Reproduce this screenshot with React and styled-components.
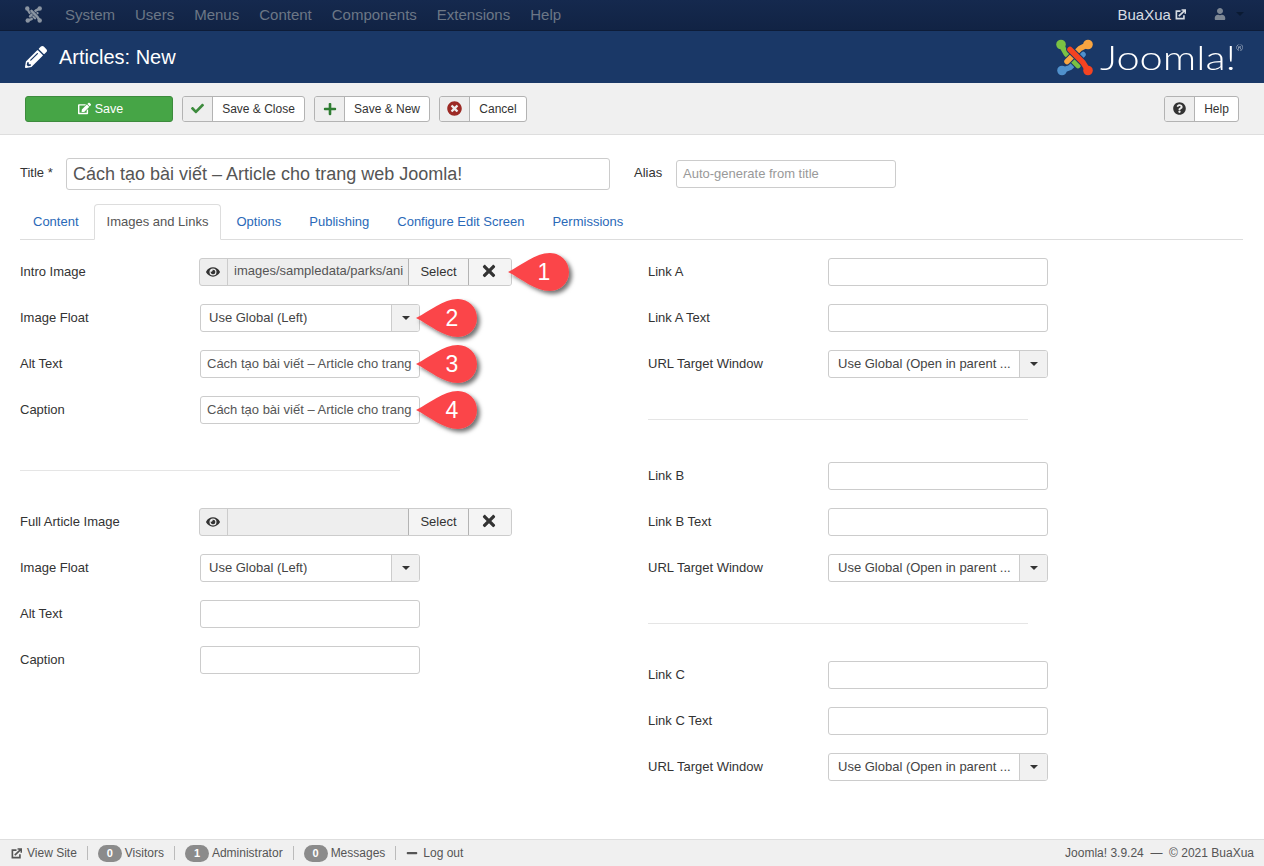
import React from "react";
import styled, { createGlobalStyle } from "styled-components";
import { FaEye, FaTimes, FaQuestionCircle, FaCheck, FaPlus, FaTimesCircle, FaUser, FaPencilAlt, FaEdit, FaMinus } from "react-icons/fa";

const Global = createGlobalStyle`
  html, body { margin: 0; padding: 0; background: #fff; }
  body { font-family: "Liberation Sans", Arial, sans-serif; font-size: 13px; color: #333; }
  * { box-sizing: border-box; }
`;

const Page = styled.div`
  position: relative;
  width: 1264px;
  height: 866px;
  overflow: hidden;
  display: flex;
  flex-direction: column;
`;
const Navbar = styled.nav`
  height: 31px;
  flex: none;
  background: linear-gradient(#15294e, #112344);
  border-bottom: 1px solid #0d1c38;
  display: flex;
  align-items: center;
  padding: 0 20px 2px 25px;
  color: #6c7786;
  font-size: 15px;
`;
const NavBrand = styled.span`
  display: flex;
  width: 40px;
`;
const NavMenu = styled.div`
  display: flex;
  gap: 20px;
  flex: 1;
`;
const NavRight = styled.div`
  display: flex;
  align-items: center;
  color: #d8dce2;
  font-size: 15px;
`;
const UserMenu = styled.span`
  display: flex;
  align-items: center;
  gap: 10px;
  color: #7d8794;
  margin-left: 28px;
`;
const Caret = styled.span`
  width: 0;
  height: 0;
  border-left: 4px solid transparent;
  border-right: 4px solid transparent;
  border-top: 4px solid ${p => p.$color || "#0a1a33"};
`;
const Header = styled.header`
  height: 52px;
  flex: none;
  background: #1a3867;
  color: #fff;
  display: flex;
  align-items: center;
  padding: 0 26px 0 25px;
`;
const HeaderTitle = styled.h1`
  margin: 0 0 0 12px;
  font-size: 20px;
  font-weight: 400;
  flex: 1;
`;
const Logo = styled.div`
  display: flex;
  align-items: center;
  gap: 7px;
`;
const LogoWord = styled.span`
  position: relative;
  display: block;
  width: 138px;
  height: 36px;
  line-height: 36px;
  font-family: Lato, "Liberation Sans", sans-serif;
  font-weight: 300;
  font-size: 33px;
  color: #fff;
  white-space: nowrap;
  transform: scaleX(1.26);
  transform-origin: left center;
`;
const Reg = styled.sup`
  position: absolute;
  font-size: 7px;
  top: 6px;
  left: 108px;
  line-height: 1;
`;
const Toolbar = styled.div`
  height: 52px;
  flex: none;
  background: #f0f0f0;
  border-bottom: 1px solid #dedede;
  display: flex;
  align-items: center;
  gap: 9px;
  padding: 0 25px;
`;
const SaveButton = styled.button`
  width: 148px;
  height: 26px;
  background: #46a546;
  border: 1px solid #3d8b3d;
  border-radius: 3px;
  color: #fff;
  font: 12.5px "Liberation Sans", sans-serif;
  display: flex;
  align-items: center;
  justify-content: center;
  gap: 4px;
  padding: 0 0 0 3px;
`;
const ToolButton = styled.button`
  width: ${p => p.$w}px;
  height: 26px;
  background: #fff;
  border: 1px solid #b3b3b3;
  border-radius: 3px;
  color: #333;
  font: 12px "Liberation Sans", sans-serif;
  display: flex;
  align-items: stretch;
  padding: 0;
  margin-left: ${p => (p.$push ? "auto" : "0")};
  overflow: hidden;
`;
const ToolIcon = styled.span`
  width: 30px;
  flex: none;
  background: #eeeeee;
  border-right: 1px solid #b3b3b3;
  display: flex;
  align-items: center;
  justify-content: center;
  color: ${p => p.$color};
  font-size: ${p => p.$size || 13}px;
`;
const ToolLabel = styled.span`
  flex: 1;
  display: flex;
  align-items: center;
  justify-content: center;
`;
const Main = styled.main`
  flex: 1;
  padding: 23px 21px 0 20px;
`;
const TitleRow = styled.div`
  display: flex;
  align-items: flex-start;
  height: 32px;
`;
const TopLabel = styled.label`
  font-size: 13px;
  line-height: 29px;
  width: ${p => p.$w}px;
  flex: none;
`;
const TitleInput = styled.div`
  width: 544px;
  height: 32px;
  border: 1px solid #ccc;
  border-radius: 3px;
  font-size: 18px;
  line-height: 30px;
  padding: 0 6px;
  color: #555;
  margin-right: 24px;
  white-space: nowrap;
  overflow: hidden;
`;
const Field = styled.div`
  flex: none;
  height: 28px;
  width: 220px;
  margin-top: ${p => p.$top || 0}px;
  border: 1px solid #ccc;
  border-radius: 3px;
  padding: 0 6px;
  font-size: 13px;
  line-height: 26px;
  color: ${p => (p.$placeholder ? "#999" : "#555")};
  background: #fff;
  white-space: nowrap;
  overflow: hidden;
`;
const Tabs = styled.div`
  display: flex;
  gap: 2px;
  margin-top: 14px;
  height: 36px;
  border-bottom: 1px solid #ddd;
`;
const Tab = styled.div`
  height: ${p => (p.$active ? 36 : 35)}px;
  padding: 0 12px;
  line-height: 34px;
  font-size: 13px;
  color: ${p => (p.$active ? "#555" : "#2a69b8")};
  border: 1px solid ${p => (p.$active ? "#ddd" : "transparent")};
  border-bottom-color: ${p => (p.$active ? "#fff" : "transparent")};
  border-radius: 4px 4px 0 0;
  background: #fff;
`;
const Columns = styled.div`
  display: grid;
  grid-template-columns: 628px 1fr;
  margin-top: 18px;
`;
const Column = styled.div`
  display: flex;
  flex-direction: column;
`;
const Row = styled.div`
  display: flex;
  align-items: center;
  height: 28px;
  margin-bottom: 18px;
`;
const RowLabel = styled.label`
  width: 180px;
  flex: none;
  font-size: 13px;
  line-height: 15px;
  padding-bottom: 1px;
  color: #333;
`;
const Rule = styled.hr`
  width: 380px;
  margin: ${p => p.$top}px 0 ${p => p.$bottom}px;
  border: 0;
  border-top: 1px solid #e5e5e5;
  height: 0;
`;
const ImageGroup = styled.div`
  display: flex;
  height: 28px;
  margin-left: -1px;
  border: 1px solid #ccc;
  border-radius: 3px;
  background: #eee;
  overflow: hidden;
`;
const Addon = styled.span`
  width: 28px;
  display: flex;
  align-items: center;
  justify-content: center;
  padding-right: 2px;
  font-size: 14px;
  color: #333;
  border-right: 1px solid #ccc;
`;
const ImagePath = styled.span`
  width: 180px;
  padding: 0 6px;
  font-size: 13px;
  line-height: 24px;
  color: #555;
  white-space: nowrap;
  overflow: hidden;
`;
const GroupButton = styled.span`
  width: ${p => p.$w}px;
  display: flex;
  align-items: center;
  justify-content: center;
  padding-right: ${p => p.$shift || 0}px;
  padding-bottom: 2px;
  background: #f4f4f4;
  border-left: 1px solid #b3b3b3;
  font-size: ${p => p.$size || 13}px;
  color: #333;
`;
const Select = styled.div`
  width: 220px;
  height: 28px;
  border: 1px solid #ccc;
  border-radius: 3px;
  display: flex;
  background: #fff;
  overflow: hidden;
`;
const SelectValue = styled.span`
  flex: 1;
  padding: 0 0 0 ${p => p.$pad || 8}px;
  line-height: 26px;
  font-size: 13px;
  color: #444;
  white-space: nowrap;
`;
const SelectArrow = styled.span`
  width: 28px;
  background: #f1f1f1;
  border-left: 1px solid #ccc;
  display: flex;
  align-items: center;
  justify-content: center;
`;
const Footer = styled.footer`
  height: 27px;
  flex: none;
  background: #f0f0f0;
  border-top: 1px solid #dedede;
  display: flex;
  align-items: center;
  padding: 0 10px;
  font-size: 12px;
  color: #555;
`;
const FootItem = styled.span`
  display: flex;
  align-items: center;
  gap: ${p => p.$gap || 3}px;
  padding: 0 10px 0 ${p => (p.$first ? 1 : 10)}px;
  height: 14px;
  border-right: ${p => (p.$last ? "0" : "1px solid #bbb")};
`;
const Count = styled.span`
  min-width: 24px;
  height: 17px;
  line-height: 17px;
  border-radius: 9px;
  background: #8b8b8b;
  color: #fff;
  font-size: 11px;
  font-weight: 700;
  text-align: center;
`;
const FootRight = styled.span`
  margin-left: auto;
`;
const Pin = styled.div`
  position: absolute;
  left: ${p => p.$x}px;
  top: ${p => p.$y}px;
  width: 72px;
  height: 48px;
`;
const PinNumber = styled.span`
  position: absolute;
  left: 0;
  top: 0;
  width: 74px;
  text-align: center;
  color: #fff;
  font-size: 23px;
  line-height: 40px;
`;

const OutIcon = ({ size = 11, color = "currentColor" }) => (
  <svg width={size} height={size} viewBox="0 0 16 16" fill="none" stroke={color}>
    <path d="M8 3H2v11h11V9" strokeWidth="2.4" />
    <path d="M5.5 10.5L14 2.5M9.5 1.5h5.5v5.5" strokeWidth="2.4" />
  </svg>
);

const JoomlaMark = ({ size, mono, bg }) => {
  const c = mono ? [mono, mono, mono, mono] : ["#7ac143", "#f9a541", "#f44321", "#5091cd"];
  const strokes = [
    { color: c[3], d: "M6 31 L14 28 L27 15", cx: 6, cy: 31 },
    { color: c[0], d: "M5 5 L10 14 L22 26", cx: 5, cy: 5 },
    { color: c[1], d: "M32 5 L24 9 L11 22", cx: 32, cy: 5 },
    { color: c[2], d: "M32 31 L27 23 L14 10", cx: 32, cy: 31 },
  ];
  return (
    <svg width={size} height={size} viewBox="0 0 37 36" fill="none">
      {strokes.map((s, i) => (
        <g key={i}>
          <path d={s.d} stroke={bg} strokeWidth="7.5" strokeLinecap="round" strokeLinejoin="round" />
          <path d={s.d} stroke={s.color} strokeWidth="5.5" strokeLinecap="round" strokeLinejoin="round" />
          <circle cx={s.cx} cy={s.cy} r="4.8" fill={s.color} />
        </g>
      ))}
    </svg>
  );
};

const Callout = ({ x, y, n }) => (
  <Pin $x={x} $y={y}>
    <svg width="72" height="48" viewBox="0 0 72 48">
      <defs>
        <filter id={`sh${n}`} x="-20%" y="-20%" width="140%" height="140%">
          <feDropShadow dx="3" dy="3" stdDeviation="2" floodColor="#000" floodOpacity="0.55" />
        </filter>
      </defs>
      <path
        d="M1 20 C15 13 28 1 43 1 C53.5 1 62 9.5 62 20 C62 30.5 53.5 39 43 39 C28 39 15 27 1 20 Z"
        fill="#fb4549"
        filter={`url(#sh${n})`}
      />
    </svg>
    <PinNumber>{n}</PinNumber>
  </Pin>
);

const LinkGroup = ({ name }) => (
  <>
    <Row><RowLabel>Link {name}</RowLabel><Field /></Row>
    <Row><RowLabel>Link {name} Text</RowLabel><Field /></Row>
    <Row>
      <RowLabel>URL Target Window</RowLabel>
      <Select>
        <SelectValue $pad={9}>Use Global (Open in parent ...</SelectValue>
        <SelectArrow><Caret $color="#333" /></SelectArrow>
      </Select>
    </Row>
  </>
);

const TITLE = "Cách tạo bài viết – Article cho trang web Joomla!";
const ALT = "Cách tạo bài viết – Article cho trang";

export default function App() {
  return (
    <Page>
      <Global />
      <Navbar>
        <NavBrand><JoomlaMark size={17} mono="#8a94a1" bg="#13264a" /></NavBrand>
        <NavMenu>
          {["System", "Users", "Menus", "Content", "Components", "Extensions", "Help"].map(m => <span key={m}>{m}</span>)}
        </NavMenu>
        <NavRight>
          BuaXua&nbsp;<OutIcon size={11} />
          <UserMenu><FaUser size={12} /><Caret /></UserMenu>
        </NavRight>
      </Navbar>
      <Header>
        <FaPencilAlt size={22} />
        <HeaderTitle>Articles: New</HeaderTitle>
        <Logo>
          <JoomlaMark size={37} bg="#1a3867" />
          <LogoWord>Joomla!<Reg>®</Reg></LogoWord>
        </Logo>
      </Header>
      <Toolbar>
        <SaveButton><FaEdit size={13} />Save</SaveButton>
        <ToolButton $w={123}><ToolIcon $color="#3d8b3d" $size={13}><FaCheck /></ToolIcon><ToolLabel>Save &amp; Close</ToolLabel></ToolButton>
        <ToolButton $w={116}><ToolIcon $color="#2f7d32" $size={14}><FaPlus /></ToolIcon><ToolLabel>Save &amp; New</ToolLabel></ToolButton>
        <ToolButton $w={88}><ToolIcon $color="#9c2a25" $size={15}><FaTimesCircle /></ToolIcon><ToolLabel>Cancel</ToolLabel></ToolButton>
        <ToolButton $w={75} $push><ToolIcon $color="#333"><FaQuestionCircle /></ToolIcon><ToolLabel>Help</ToolLabel></ToolButton>
      </Toolbar>
      <Main>
        <TitleRow>
          <TopLabel $w={46}>Title *</TopLabel>
          <TitleInput>{TITLE}</TitleInput>
          <TopLabel $w={42}>Alias</TopLabel>
          <Field $top={2} $placeholder>Auto-generate from title</Field>
        </TitleRow>
        <Tabs>
          <Tab>Content</Tab>
          <Tab $active>Images and Links</Tab>
          <Tab>Options</Tab>
          <Tab>Publishing</Tab>
          <Tab>Configure Edit Screen</Tab>
          <Tab>Permissions</Tab>
        </Tabs>
        <Columns>
          <Column>
            <Row>
              <RowLabel>Intro Image</RowLabel>
              <ImageGroup>
                <Addon><FaEye /></Addon>
                <ImagePath>images/sampledata/parks/ani</ImagePath>
                <GroupButton $w={60}>Select</GroupButton>
                <GroupButton $w={43} $size={18} $shift={2}><FaTimes /></GroupButton>
              </ImageGroup>
            </Row>
            <Row>
              <RowLabel>Image Float</RowLabel>
              <Select><SelectValue>Use Global (Left)</SelectValue><SelectArrow><Caret $color="#333" /></SelectArrow></Select>
            </Row>
            <Row><RowLabel>Alt Text</RowLabel><Field>{ALT}</Field></Row>
            <Row><RowLabel>Caption</RowLabel><Field>{ALT}</Field></Row>
            <Rule $top={28} $bottom={37} />
            <Row>
              <RowLabel>Full Article Image</RowLabel>
              <ImageGroup>
                <Addon><FaEye /></Addon>
                <ImagePath />
                <GroupButton $w={60}>Select</GroupButton>
                <GroupButton $w={43} $size={18} $shift={2}><FaTimes /></GroupButton>
              </ImageGroup>
            </Row>
            <Row>
              <RowLabel>Image Float</RowLabel>
              <Select><SelectValue>Use Global (Left)</SelectValue><SelectArrow><Caret $color="#333" /></SelectArrow></Select>
            </Row>
            <Row><RowLabel>Alt Text</RowLabel><Field /></Row>
            <Row><RowLabel>Caption</RowLabel><Field /></Row>
          </Column>
          <Column>
            <LinkGroup name="A" />
            <Rule $top={23} $bottom={42} />
            <LinkGroup name="B" />
            <Rule $top={23} $bottom={37} />
            <LinkGroup name="C" />
          </Column>
        </Columns>
      </Main>
      <Footer>
        <FootItem $first $gap={5}><OutIcon size={11} color="#555" />View Site</FootItem>
        <FootItem><Count>0</Count>Visitors</FootItem>
        <FootItem><Count>1</Count>Administrator</FootItem>
        <FootItem><Count>0</Count>Messages</FootItem>
        <FootItem $last $gap={5}><FaMinus size={12} />Log out</FootItem>
        <FootRight>Joomla! 3.9.24 &nbsp;— &nbsp;© 2021 BuaXua</FootRight>
      </Footer>
      <Callout x={507} y={252} n={1} />
      <Callout x={415} y={298} n={2} />
      <Callout x={415} y={344} n={3} />
      <Callout x={415} y={390} n={4} />
    </Page>
  );
}
